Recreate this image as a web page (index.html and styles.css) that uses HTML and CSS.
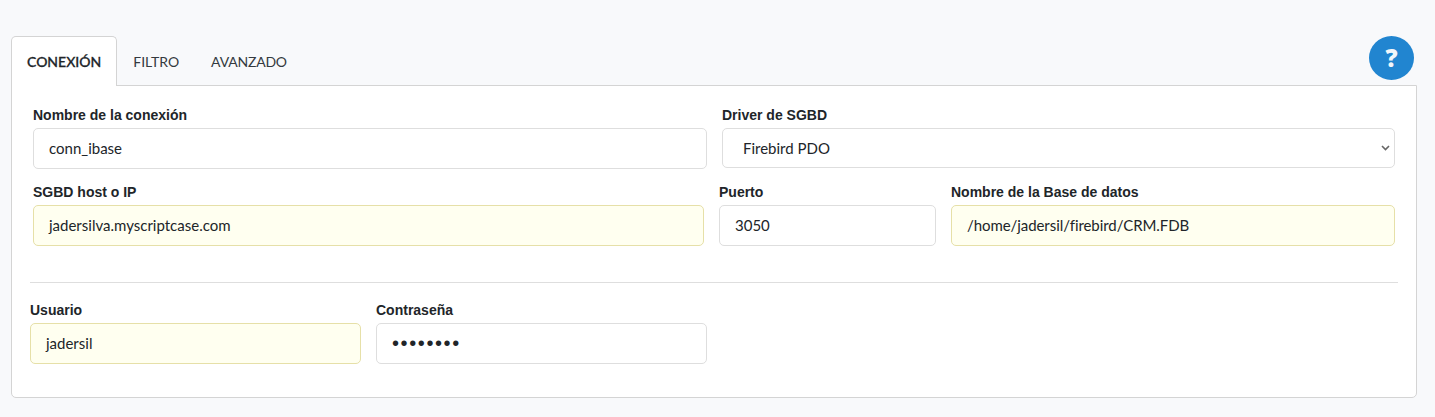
FILE: index.html
```html
<!DOCTYPE html>
<html lang="es">
<head>
  <meta charset="UTF-8" />
  <title>Conexión</title>
  <link rel="stylesheet" href="styles.css">
</head>
<body>
  <div class="page">
    <div class="tabs-bar">
      <div class="tabs">
        <div class="tab active">CONEXIÓN</div>
        <div class="tab">FILTRO</div>
        <div class="tab tab-last">AVANZADO</div>
      </div>
      <button class="help" type="button">?</button>
    </div>

    <div class="panel">
      <div class="row row-first">
        <div class="field field-name">
          <label>Nombre de la conexión</label>
          <div class="input">conn_ibase</div>
        </div>
        <div class="field field-driver">
          <label>Driver de SGBD</label>
          <div class="input select">
            <span>Firebird PDO</span>
            <svg width="9" height="6" viewBox="0 0 9 6"><path d="M1 1l3.5 3.5L8 1" fill="none" stroke="#666" stroke-width="1.6"/></svg>
          </div>
        </div>
      </div>

      <div class="row row-second">
        <div class="field field-host">
          <label>SGBD host o IP</label>
          <div class="input filled">jadersilva.myscriptcase.com</div>
        </div>
        <div class="field field-port">
          <label>Puerto</label>
          <div class="input">3050</div>
        </div>
        <div class="field field-db">
          <label>Nombre de la Base de datos</label>
          <div class="input filled db-path">/home/jadersil/firebird/CRM.FDB</div>
        </div>
      </div>

      <hr class="divider">

      <div class="row row-third">
        <div class="field field-half">
          <label>Usuario</label>
          <div class="input filled">jadersil</div>
        </div>
        <div class="field field-half">
          <label>Contraseña</label>
          <div class="input password">••••••••</div>
        </div>
      </div>
    </div>
  </div>
</body>
</html>
```

FILE: styles.css
```css
html, body {
  margin: 0;
  padding: 0;
  height: 100%;
  background-color: #f8f9fb;
  color: #212529;
  font-family: Lato, sans-serif;
}

.page {
  padding: 36px 18px 0 11px;
}

.tabs-bar {
  display: flex;
  justify-content: space-between;
  align-items: flex-start;
  height: 49px;
}

.tabs {
  display: flex;
}

.tab {
  height: 49px;
  line-height: 51px;
  padding: 0 16px;
  font-size: 14px;
  color: #343a40;
  box-sizing: border-box;
}

.tab-last {
  letter-spacing: -0.2px;
}

.tab.active {
  position: relative;
  z-index: 1;
  height: 50px;
  line-height: 49px;
  padding: 0 15px;
  color: #212529;
  font-weight: 500;
  background-color: #fff;
  border: 1px solid #d4d4d4;
  border-bottom: 0;
  border-radius: 5px 5px 0 0;
  -webkit-text-stroke: 0.3px #212529;
}

.help {
  width: 45px;
  height: 44px;
  margin-right: 3px;
  padding: 0;
  border: 0;
  border-radius: 50%;
  background-color: #2185d0;
  color: #f2f6fa;
  font-family: "Open Sans", sans-serif;
  font-size: 24px;
  font-weight: 800;
  line-height: 44px;
  text-align: center;
}

.panel {
  height: 313px;
  box-sizing: border-box;
  background-color: #fff;
  border: 1px solid #d4d4d4;
  border-radius: 0 0 5px 5px;
  padding: 21px 18px 0 18px;
}

.row {
  display: flex;
}

.row-first {
  gap: 15px;
  margin-left: 3px;
  margin-bottom: 15px;
}

.row-second {
  gap: 15px;
  margin-left: 3px;
}

.row-third {
  gap: 15px;
}

.field label {
  display: block;
  height: 21px;
  line-height: 17px;
  font-family: "Liberation Sans", Arial, sans-serif;
  font-size: 14px;
  font-weight: bold;
  color: #212529;
}

.field-name { width: 674px; }
.field-driver { width: 673px; }
.field-driver .input { height: 40px; }
.field-host { width: 671px; }
.field-port { width: 217px; }
.field-db { width: 444px; }
.field-half { width: 331px; }

.input {
  height: 41px;
  line-height: 39px;
  padding: 0 15px;
  box-sizing: border-box;
  background-color: #fff;
  border: 1px solid #dedede;
  border-radius: 5px;
  font-size: 15px;
  color: #212529;
}

.filled {
  background-color: #fffff0;
  border-color: #e6e0a8;
}

.db-path {
  letter-spacing: -0.07px;
}

.select {
  display: flex;
  justify-content: space-between;
  align-items: center;
  padding: 0 4px 0 20px;
}

.password {
  font-family: "Liberation Sans", Arial, sans-serif;
  font-size: 20px;
  letter-spacing: 1.6px;
}

.divider {
  height: 1px;
  margin: 36px 0 19px;
  border: 0;
  background-color: #dedede;
}
```
